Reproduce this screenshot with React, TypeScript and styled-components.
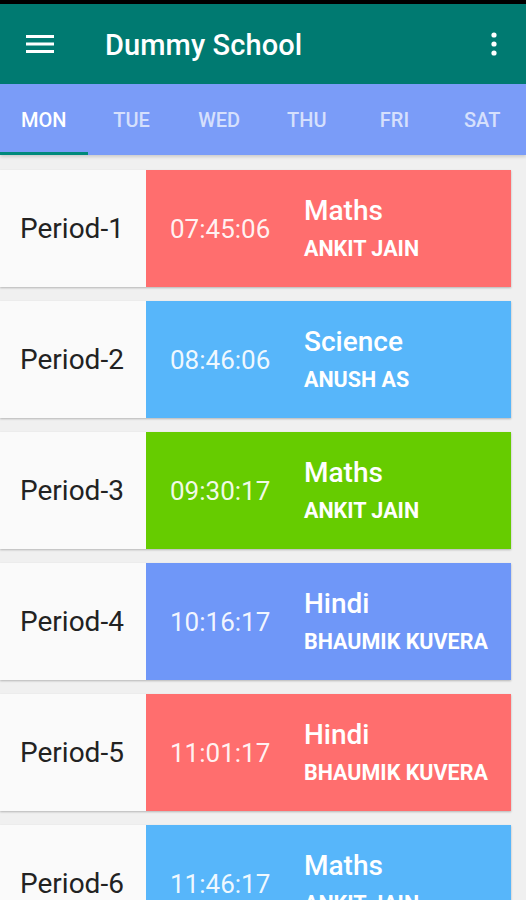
import { FC } from "react";
import styled, { createGlobalStyle } from "styled-components";

const GlobalStyle = createGlobalStyle`
  html, body {
    margin: 0;
    padding: 0;
    height: 900px;
    overflow: hidden;
    background: #f0f0f0;
    font-family: Roboto, "Noto Sans", sans-serif;
  }
`;

const StatusBar = styled.div`
  height: 4px;
  background: #000;
`;

const Toolbar = styled.header`
  height: 80px;
  background: #007a71;
  display: flex;
  align-items: center;
  padding: 0 0 0 26px;
  color: #fff;
`;

const Title = styled.h1`
  margin: 2px 0 0 51px;
  font-size: 29px;
  font-weight: 500;
  flex: 1;
  letter-spacing: 0.1px;
`;

const IconButton = styled.div<{ $edge?: number }>`
  display: flex;
  align-items: center;
  justify-content: center;
  width: 28px;
  height: 28px;
  margin-right: ${(p) => p.$edge ?? 0}px;
`;

const Tabs = styled.nav`
  height: 71px;
  background: #7a9cf8;
  display: grid;
  grid-template-columns: repeat(6, 1fr);
  box-shadow: 0 2px 3px rgba(0, 0, 0, 0.15);
  position: relative;
`;

const Tab = styled.div<{ $active?: boolean }>`
  display: flex;
  align-items: center;
  justify-content: center;
  font-size: 20px;
  font-weight: 500;
  color: ${(p) => (p.$active ? "#fff" : "rgba(255,255,255,0.7)")};
  border-bottom: 3px solid ${(p) => (p.$active ? "#00897b" : "transparent")};
  padding-top: 3px;
`;

const List = styled.main`
  display: flex;
  flex-direction: column;
  gap: 14px;
  padding-top: 15px;
`;

const Card = styled.div`
  display: flex;
  height: 117px;
  margin-right: 15px;
  background: #fafafa;
  box-shadow: 0 1px 2px rgba(0, 0, 0, 0.25);
`;

const PeriodCell = styled.div`
  width: 146px;
  display: flex;
  align-items: center;
  padding-left: 20px;
  box-sizing: border-box;
  font-size: 28px;
  color: #222;
`;

const Slot = styled.div<{ $color: string }>`
  flex: 1;
  background: ${(p) => p.$color};
  display: flex;
  align-items: center;
  color: #fff;
`;

const Time = styled.div`
  width: 158px;
  padding-left: 24px;
  box-sizing: border-box;
  font-size: 26px;
  font-weight: 400;
  color: rgba(255, 255, 255, 0.92);
`;

const Info = styled.div`
  display: flex;
  flex-direction: column;
  gap: 9px;
  margin-top: -2px;
`;

const Subject = styled.div`
  font-size: 28px;
  font-weight: 500;
`;

const Teacher = styled.div`
  font-size: 21.5px;
  font-weight: 700;
`;

const days = ["MON", "TUE", "WED", "THU", "FRI", "SAT"];

const periods = [
  { time: "07:45:06", subject: "Maths", teacher: "ANKIT JAIN", color: "#ff6e6e" },
  { time: "08:46:06", subject: "Science", teacher: "ANUSH AS", color: "#57b6fa" },
  { time: "09:30:17", subject: "Maths", teacher: "ANKIT JAIN", color: "#66cc00" },
  { time: "10:16:17", subject: "Hindi", teacher: "BHAUMIK KUVERA", color: "#6f97f8" },
  { time: "11:01:17", subject: "Hindi", teacher: "BHAUMIK KUVERA", color: "#ff6e6e" },
  { time: "11:46:17", subject: "Maths", teacher: "ANKIT JAIN", color: "#57b6fa" },
];

const App: FC = () => {
  return (
    <>
      <GlobalStyle />
      <StatusBar />
      <Toolbar>
        <IconButton>
          <svg width="28" height="20" viewBox="0 0 28 20">
            <rect x="0" y="1" width="28" height="3" fill="#fff" />
            <rect x="0" y="8.5" width="28" height="3" fill="#fff" />
            <rect x="0" y="16" width="28" height="3" fill="#fff" />
          </svg>
        </IconButton>
        <Title>Dummy School</Title>
        <IconButton $edge={18}>
          <svg width="8" height="24" viewBox="0 0 8 24">
            <circle cx="4" cy="3" r="2.6" fill="#fff" />
            <circle cx="4" cy="12" r="2.6" fill="#fff" />
            <circle cx="4" cy="21" r="2.6" fill="#fff" />
          </svg>
        </IconButton>
      </Toolbar>
      <Tabs>
        {days.map((d, i) => (
          <Tab key={d} $active={i === 0}>
            {d}
          </Tab>
        ))}
      </Tabs>
      <List>
        {periods.map((p, i) => (
          <Card key={i}>
            <PeriodCell>Period-{i + 1}</PeriodCell>
            <Slot $color={p.color}>
              <Time>{p.time}</Time>
              <Info>
                <Subject>{p.subject}</Subject>
                <Teacher>{p.teacher}</Teacher>
              </Info>
            </Slot>
          </Card>
        ))}
      </List>
    </>
  );
};

export default App;
